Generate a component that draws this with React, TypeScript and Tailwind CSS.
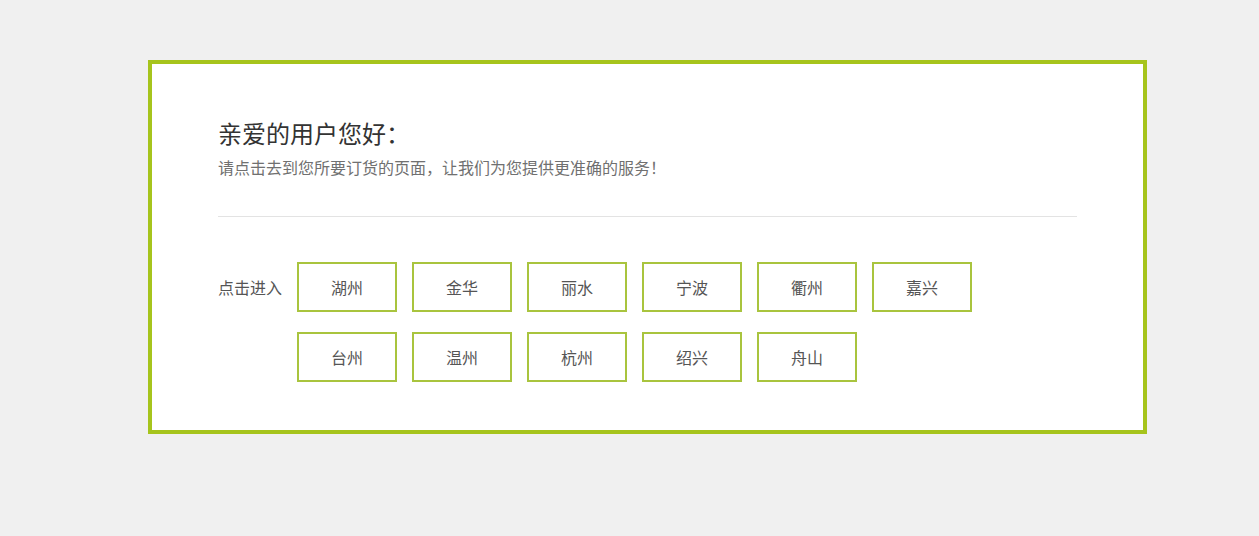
import React from 'react';

const rows = ['湖州', '金华', '丽水', '宁波', '衢州', '嘉兴', '台州', '温州', '杭州', '绍兴', '舟山'];

export default function App() {
  return (
    <div
      className="min-h-[536px] w-full bg-[#f0f0f0] pt-[60px] pl-[148px]"
      style={{ fontFamily: '"Noto Sans CJK SC", "Noto Sans", sans-serif' }}
    >
      <div className="w-[999px] h-[374px] border-4 border-[#a6c41c] bg-white px-[66px] pt-[57px]">
        {/* Greeting */}
        <h1 className="text-[24px] leading-[24px] text-[#333] font-normal">亲爱的用户您好：</h1>
        <p className="mt-[14px] text-[16px] leading-[16px] text-[#707070]">
          请点击去到您所要订货的页面，让我们为您提供更准确的服务！
        </p>

        <div className="mt-[41px] h-px bg-[#e3e3e3]" />

        {/* City list */}
        <div className="mt-[45px] flex">
          <div className="w-[79px] h-[50px] flex items-center text-[16px] text-[#555]">点击进入</div>
          <div className="grid grid-cols-[repeat(6,100px)] gap-x-[15px] gap-y-[20px]">
            {rows.map((city) => (
              <button
                key={city}
                className="w-[100px] h-[50px] border-2 border-[#a9c43e] bg-white flex items-center justify-center text-[16px] text-[#555] cursor-pointer"
              >
                {city}
              </button>
            ))}
          </div>
        </div>
      </div>
    </div>
  );
}
